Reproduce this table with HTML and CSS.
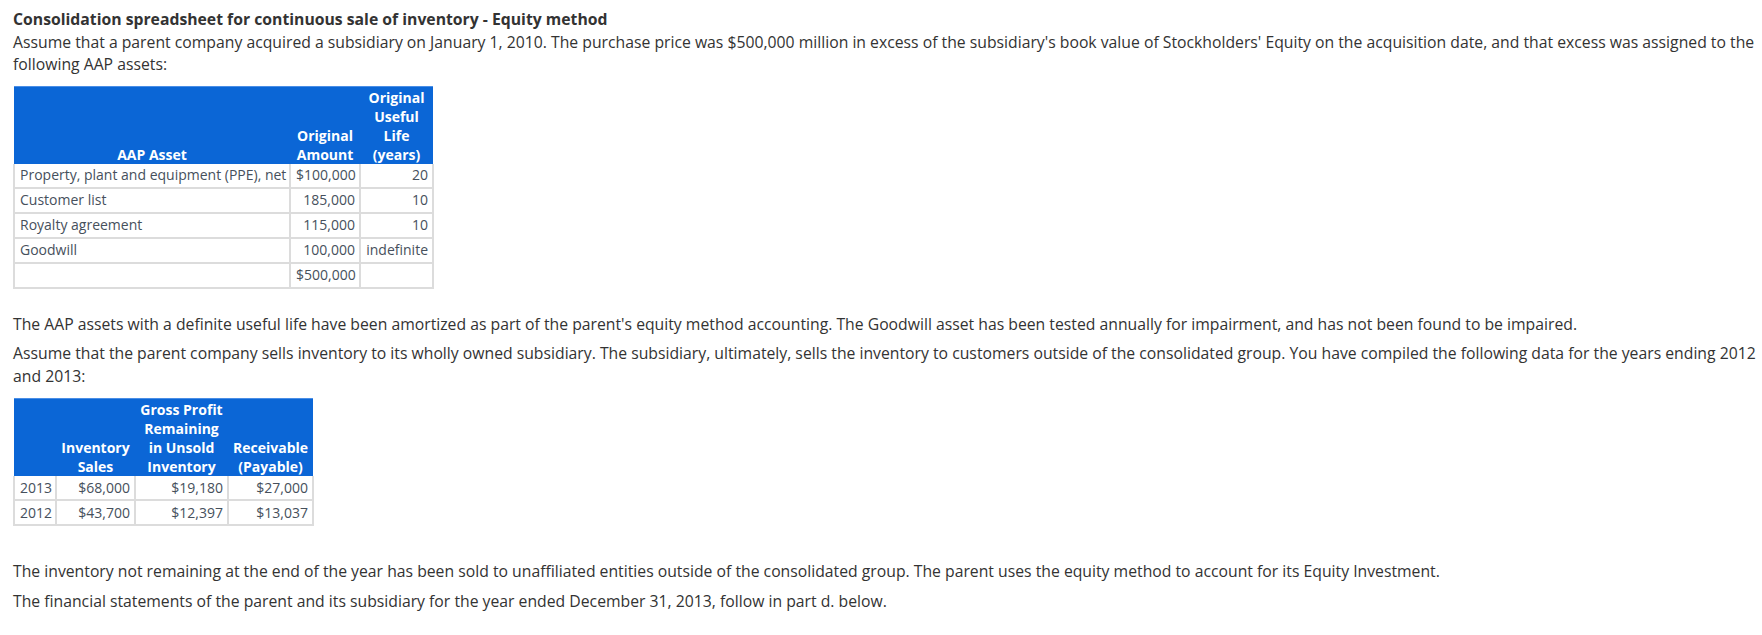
FILE: index.html
```html
<!DOCTYPE html>
<html>
<head>
<meta charset="utf-8">
<link rel="stylesheet" href="styles.css">
</head>
<body>
<div class="page">
  <div class="intro">
    <div class="title">Consolidation spreadsheet for continuous sale of inventory - Equity method</div>
    <div class="text">Assume that a parent company acquired a subsidiary on January 1, 2010. The purchase price was $500,000 million in excess of the subsidiary's book value of Stockholders' Equity on the acquisition date, and that excess was assigned to the following AAP assets:</div>
  </div>

  <table class="grid aap">
    <colgroup><col class="c1"><col class="c2"><col class="c3"></colgroup>
    <thead>
      <tr>
        <th>AAP Asset</th>
        <th>Original<br>Amount</th>
        <th>Original<br>Useful<br>Life<br>(years)</th>
      </tr>
    </thead>
    <tbody>
      <tr><td class="l">Property, plant and equipment (PPE), net</td><td class="r">$100,000</td><td class="r">20</td></tr>
      <tr><td class="l">Customer list</td><td class="r">185,000</td><td class="r">10</td></tr>
      <tr><td class="l">Royalty agreement</td><td class="r">115,000</td><td class="r">10</td></tr>
      <tr><td class="l">Goodwill</td><td class="r">100,000</td><td class="r">indefinite</td></tr>
      <tr><td class="l"></td><td class="r total">$500,000</td><td class="r"></td></tr>
    </tbody>
  </table>

  <p class="para first">The AAP assets with a definite useful life have been amortized as part of the parent's equity method accounting. The Goodwill asset has been tested annually for impairment, and has not been found to be impaired.</p>
  <p class="para">Assume that the parent company sells inventory to its wholly owned subsidiary. The subsidiary, ultimately, sells the inventory to customers outside of the consolidated group. You have compiled the following data for the years ending 2012 and 2013:</p>

  <table class="grid inv">
    <colgroup><col class="d1"><col class="d2"><col class="d3"><col class="d4"></colgroup>
    <thead>
      <tr>
        <th></th>
        <th>Inventory<br>Sales</th>
        <th>Gross Profit<br>Remaining<br>in Unsold<br>Inventory</th>
        <th>Receivable<br>(Payable)</th>
      </tr>
    </thead>
    <tbody>
      <tr><td class="l">2013</td><td class="r">$68,000</td><td class="r">$19,180</td><td class="r">$27,000</td></tr>
      <tr><td class="l">2012</td><td class="r">$43,700</td><td class="r">$12,397</td><td class="r">$13,037</td></tr>
    </tbody>
  </table>

  <p class="para after">The inventory not remaining at the end of the year has been sold to unaffiliated entities outside of the consolidated group. The parent uses the equity method to account for its Equity Investment.</p>
  <p class="para">The financial statements of the parent and its subsidiary for the year ended December 31, 2013, follow in part d. below.</p>
</div>
</body>
</html>
```

FILE: styles.css
```css
html, body {
  margin: 0;
  padding: 0;
  background: #ffffff;
}
body {
  font-family: "Open Sans", "Liberation Sans", sans-serif;
  color: #333333;
}
.page {
  padding: 8px 4px 0 13px;
}
.intro {
  font-size: 15.75px;
  line-height: 22.5px;
}
.title {
  font-weight: 700;
}
.text {
  margin-bottom: 10px;
}
.grid {
  border-collapse: collapse;
  table-layout: fixed;
  font-size: 14px;
  color: #46505c;
}
.aap { width: 419px; }
.inv { width: 299px; margin-top: 11px; }
.aap .c1 { width: 276px; }
.aap .c2 { width: 70px; }
.aap .c3 { width: 73px; }
.inv .d1 { width: 42px; }
.inv .d2 { width: 79px; }
.inv .d3 { width: 93px; }
.inv .d4 { width: 85px; }
.grid th {
  background: #0b66d6;
  color: #ffffff;
  font-weight: 700;
  line-height: 19px;
  vertical-align: bottom;
  text-align: center;
  padding: 1px 3px 0 3px;
  border-top: 1px solid #4a8ee6;
  white-space: nowrap;
}
.grid td {
  border: 2px solid #dcdcdc;
  border-top: none;
  height: 23px;
  padding: 0 4px 0 5px;
  white-space: nowrap;
  line-height: 20px;
}
.grid td.l { text-align: left; }
.grid td.r { text-align: right; }
.grid td.total { border-top: 2px solid #7a7a7a; }
.para {
  font-size: 15.75px;
  line-height: 22.5px;
  margin: 0 0 7px 0;
}
.para.first { margin-top: 24px; }
.para.after { margin-top: 34px; }
```
